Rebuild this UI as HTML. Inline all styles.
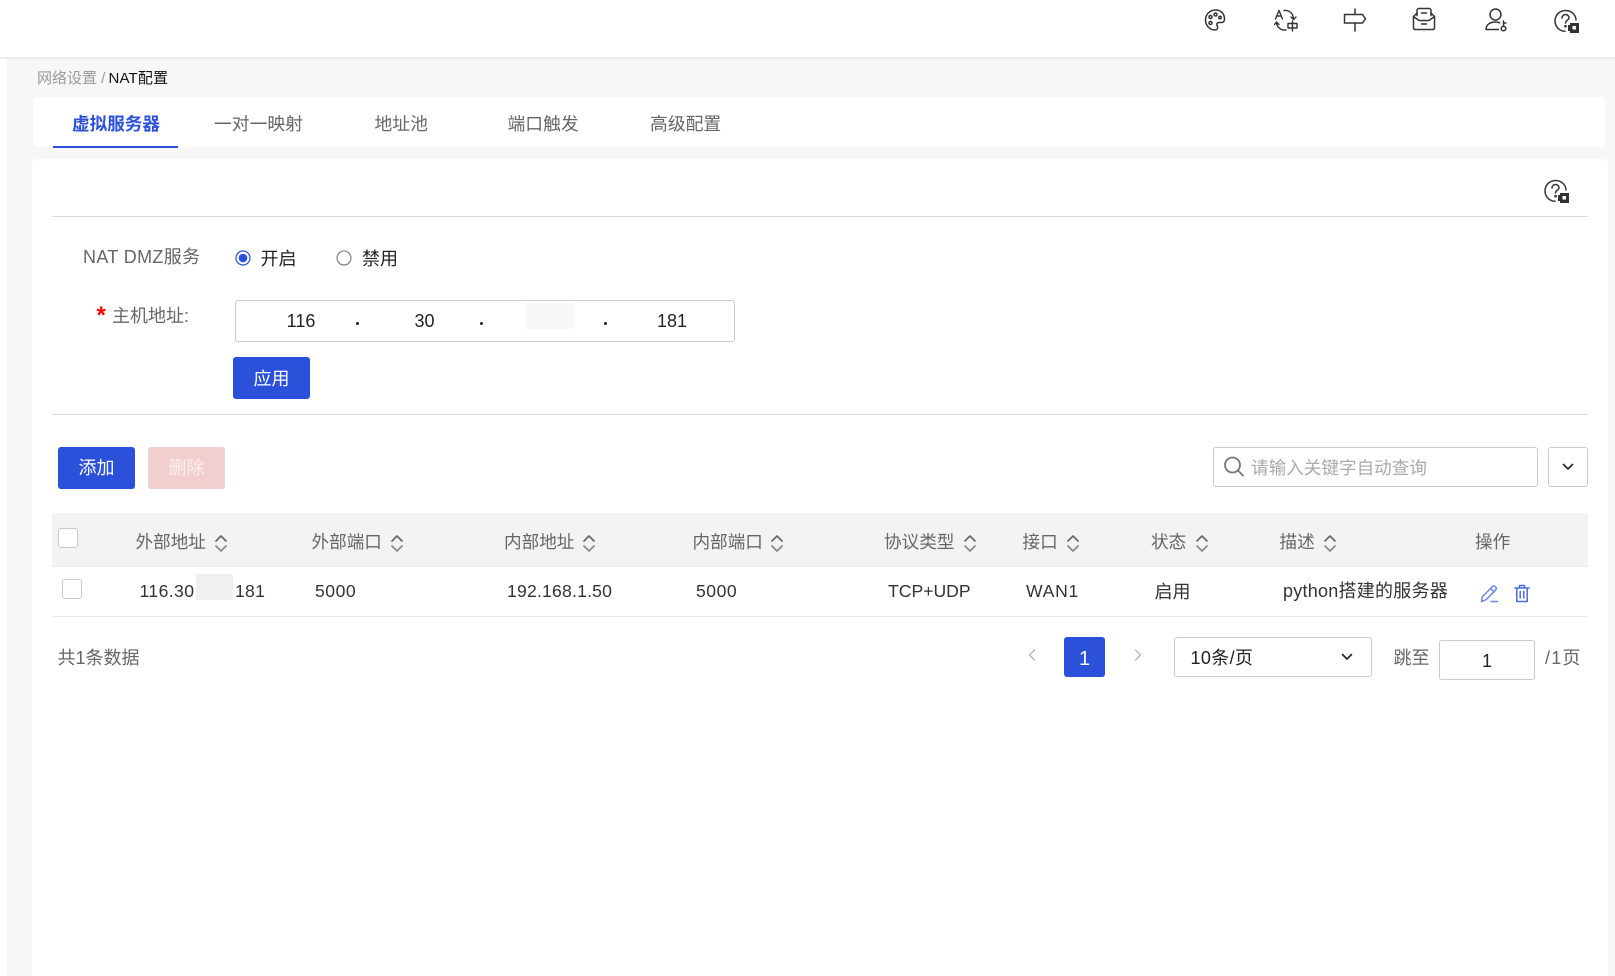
<!DOCTYPE html>
<html lang="zh-CN">
<head>
<meta charset="utf-8">
<title>NAT配置</title>
<style>
html,body{margin:0;padding:0;width:1615px;height:976px;overflow:hidden;background:#fff}
body{position:relative;font-family:"Liberation Sans","Noto Sans CJK SC",sans-serif;font-size:17px;color:#333}
.a{position:absolute;box-sizing:border-box}
.t{position:absolute;white-space:nowrap;line-height:20px;height:20px;font-size:17.6px}
.c{transform:translateX(-50%)}
.g{color:#666}
.d{color:#333}
.w{font-size:18px}
.btn{position:absolute;box-sizing:border-box;width:77px;height:42px;background:#2b50d9;border-radius:3px;color:#fff;font-size:18px;line-height:44px;text-align:center}
.cb{position:absolute;box-sizing:border-box;width:20px;height:20px;border:1px solid #ccc;border-radius:3px;background:#fff}
svg{position:absolute;overflow:visible;fill:none}
.hd{top:532px}
.rw{top:581px;letter-spacing:.25px}
</style>
</head>
<body>
<!-- backgrounds -->
<div class="a" style="left:7px;top:58px;width:1608px;height:918px;background:#f7f7f7"></div>
<div class="a" style="left:0;top:57px;width:1615px;height:2px;background:#ececec"></div>
<div class="a" style="left:33px;top:97px;width:1572px;height:50px;background:#fff;border-radius:4px"></div>
<div class="a" style="left:32px;top:159px;width:1576px;height:817px;background:#fff;border-radius:4px 4px 0 0"></div>

<!-- top icons -->
<svg style="left:1203px;top:8px" width="24" height="24" viewBox="0 0 24 24" stroke="#333" stroke-width="1.500" stroke-linecap="round" stroke-linejoin="round"><path d="M12.500 2c-5.600 0-10 4.300-10 10 0 5.300 4.200 10 9.500 10 1.600 0 2.700-1.200 2.700-2.600 0-.7-.3-1.300-.6-1.800-.4-.6-.5-1.200-.2-1.900.4-.8 1.100-1.200 2.100-1.200h2.600c1.500 0 2.900-1.100 2.900-3.300C21.500 5.500 17.600 2 12.500 2z"/><circle cx="7.500" cy="9" r="1.500"/><circle cx="12.500" cy="6.500" r="1.500"/><circle cx="17" cy="9.500" r="1.200"/><circle cx="7.500" cy="15" r="1.500"/></svg>

<svg style="left:1274px;top:8px" width="24" height="24" viewBox="0 0 24 24" stroke="#333" stroke-width="1.400" stroke-linecap="round" stroke-linejoin="round"><path d="M1.500 11 5 2.500l3.500 8.500M2.800 8h4.400"/><path d="M10 2.500c5-.5 9 2.500 9.500 8M17 9l2.500 2.500 2.500-2.500"/><path d="M12 22c-5 .5-9-2.500-9.500-7.500M.5 16.500 2.500 14 5 16.500"/><path d="M14 15.500h9V20h-9zM18.500 13v10"/></svg>

<svg style="left:1343px;top:8px" width="24" height="24" viewBox="0 0 24 24" stroke="#333" stroke-width="1.500" stroke-linecap="round" stroke-linejoin="round"><path d="M1.500 6.500h18l3 4.300-3 4.200h-18zM12 1v5.500M12 15v8"/></svg>

<svg style="left:1412px;top:7px" width="24" height="24" viewBox="0 0 24 24" stroke="#333" stroke-width="1.500" stroke-linecap="round" stroke-linejoin="round"><path d="M5 8.500V3.500C5 2.200 6 1.500 7 1.500h10c1 0 2 .7 2 2v5"/><path d="M5 6 1.500 9.500v11c0 1.300.8 2 2 2h17c1.200 0 2-.7 2-2v-11L19 6"/><path d="M1.500 9.500 7 13.500h10l5.500-4M9.500 6h5M9.500 17h5"/></svg>

<svg style="left:1484px;top:8px" width="24" height="24" viewBox="0 0 24 24" stroke="#333" stroke-width="1.500" stroke-linecap="round" stroke-linejoin="round"><circle cx="11.500" cy="6.500" r="5.500"/><path d="M2 21.500c0-4.500 3.500-7.500 9.500-7.500 1.600 0 3 .3 4.200.8M2 21.500h12.500"/><circle cx="19.500" cy="20.500" r="2.300"/><path d="M19.500 18.200V13M19.500 15h2.300"/></svg>

<svg style="left:1554px;top:9px" width="24" height="24" viewBox="0 0 24 24" stroke="#333" stroke-width="1.500" stroke-linecap="round" stroke-linejoin="round"><path d="M11 22.300C5.200 22 1 17.500 1 12 1 6.200 5.500 1.500 11.500 1.500S22 6 22 11"/><path d="M8 9c0-2 1.500-3.500 3.500-3.500S15 7 15 8.800c0 2.200-3.500 2.700-3.500 5.200"/><circle cx="11.500" cy="17.200" r=".6"/><rect x="14" y="16" width="5" height="6" fill="#333" stroke="none"/><rect x="16" y="14" width="9" height="10" fill="#333" stroke="none"/><rect x="18.500" y="17" width="3.500" height="3.500" fill="#fff" stroke="none"/></svg>

<!-- breadcrumb -->
<div class="t" style="left:37px;top:69px;font-size:15px;color:#999">网络设置 / <span style="color:#111;margin-left:-1px;letter-spacing:.15px">NAT配置</span></div>

<!-- tabs -->
<div class="t" style="left:72px;top:114px;color:#2b50d9;font-weight:bold">虚拟服务器</div>
<div class="a" style="left:53px;top:146px;width:125px;height:2px;background:#2b50d9"></div>
<div class="t g" style="left:214px;top:114px;font-size:17.8px">一对一映射</div>
<div class="t g" style="left:374.500px;top:114px;font-size:17.8px">地址池</div>
<div class="t g" style="left:507.500px;top:114px;font-size:17.8px">端口触发</div>
<div class="t g" style="left:650px;top:114px;font-size:17.8px">高级配置</div>

<!-- help -->
<svg style="left:1544px;top:179px" width="24" height="24" viewBox="0 0 24 24" stroke="#333" stroke-width="1.500" stroke-linecap="round" stroke-linejoin="round"><path d="M11 22.300C5.200 22 1 17.500 1 12 1 6.200 5.500 1.500 11.500 1.500S22 6 22 11"/><path d="M8 9c0-2 1.500-3.500 3.500-3.500S15 7 15 8.800c0 2.200-3.500 2.700-3.500 5.200"/><circle cx="11.500" cy="17.200" r=".6"/><rect x="14" y="16" width="5" height="6" fill="#333" stroke="none"/><rect x="16" y="14" width="9" height="10" fill="#333" stroke="none"/><rect x="18.500" y="17" width="3.500" height="3.500" fill="#fff" stroke="none"/></svg>
<div class="a" style="left:52px;top:216px;width:1536px;height:1px;background:#d9d9d9"></div>

<!-- NAT DMZ -->
<div class="t g w" style="left:83px;top:247px;letter-spacing:.35px">NAT DMZ服务</div>
<svg style="left:235px;top:250px" width="16" height="16" viewBox="0 0 16 16"><circle cx="8" cy="8" r="7" stroke="#2b50d9" stroke-width="1.200" fill="#fff"/><circle cx="8" cy="8" r="4.300" fill="#2b50d9"/></svg>
<div class="t w" style="left:260.500px;top:249px;color:#222">开启</div>
<svg style="left:336px;top:250px" width="16" height="16" viewBox="0 0 16 16"><circle cx="8" cy="8" r="7" stroke="#777" stroke-width="1.100" fill="#fff"/></svg>
<div class="t w" style="left:362px;top:249px;color:#222">禁用</div>

<!-- host -->
<div class="t" style="left:96.500px;top:306px;color:#f00;font-size:24px;font-weight:bold">*</div>
<div class="t g w" style="left:112px;top:306px">主机地址:</div>
<div class="a" style="left:235px;top:300px;width:500px;height:42px;border:1px solid #ccc;border-radius:3px;background:#fff"></div>
<div class="t c w" style="left:301px;top:311px;color:#222">116</div>
<div class="t c w" style="left:424.500px;top:311px;color:#222">30</div>
<div class="t c w" style="left:672px;top:311px;color:#222">181</div>
<div class="a" style="left:356px;top:322px;width:3px;height:3px;border-radius:50%;background:#222"></div>
<div class="a" style="left:480px;top:322px;width:3px;height:3px;border-radius:50%;background:#222"></div>
<div class="a" style="left:604px;top:322px;width:3px;height:3px;border-radius:50%;background:#222"></div>
<div class="a" style="left:526px;top:303px;width:49px;height:26px;background:#f8f8f8"></div>

<div class="btn" style="left:233px;top:357px">应用</div>
<div class="a" style="left:52px;top:414px;width:1536px;height:1px;background:#d9d9d9"></div>

<!-- toolbar -->
<div class="btn" style="left:58px;top:447px;line-height:42px">添加</div>
<div class="btn" style="left:148px;top:447px;line-height:42px;background:#f2cfcf;color:#fbeeee">删除</div>

<div class="a" style="left:1213px;top:447px;width:325px;height:40px;border:1px solid #ccc;border-radius:3px;background:#fff"></div>
<svg style="left:1223px;top:456px" width="22" height="22" viewBox="0 0 22 22" stroke="#777" stroke-width="1.800" stroke-linecap="round"><circle cx="9.500" cy="9" r="7.500"/><path d="M15 14.500l5 5"/></svg>
<div class="t" style="left:1251px;top:458px;color:#aaa">请输入关键字自动查询</div>
<div class="a" style="left:1548px;top:447px;width:40px;height:40px;border:1px solid #ccc;border-radius:3px;background:#fff"></div>
<svg style="left:1562px;top:463px" width="12" height="8" viewBox="0 0 12 8" stroke="#222" stroke-width="1.600" stroke-linecap="round" stroke-linejoin="round"><path d="M1.500 1.500 6 6l4.500-4.500"/></svg>

<!-- table head -->
<div class="a" style="left:52px;top:513px;width:1536px;height:53px;background:#f3f3f3"></div>
<div class="a" style="left:52px;top:566px;width:1536px;height:1px;background:#ebebeb"></div>
<div class="cb" style="left:58px;top:528px"></div>
<div class="t g hd" style="left:135.500px">外部地址</div>
<div class="t g hd" style="left:311.500px">外部端口</div>
<div class="t g hd" style="left:504px">内部地址</div>
<div class="t g hd" style="left:692.500px">内部端口</div>
<div class="t g hd" style="left:884px">协议类型</div>
<div class="t g hd" style="left:1022.500px">接口</div>
<div class="t g hd" style="left:1151px">状态</div>
<div class="t g hd" style="left:1279.500px">描述</div>
<div class="t g hd" style="left:1475px">操作</div>

<svg style="left:215px;top:535px" width="12" height="17" viewBox="0 0 12 17" stroke-width="1.700" stroke-linecap="round" stroke-linejoin="round"><path d="M1 6 6 1l5 5" stroke="#666"/><path d="M1 11l5 5 5-5" stroke="#888"/></svg>
<svg style="left:391px;top:535px" width="12" height="17" viewBox="0 0 12 17" stroke-width="1.700" stroke-linecap="round" stroke-linejoin="round"><path d="M1 6 6 1l5 5" stroke="#666"/><path d="M1 11l5 5 5-5" stroke="#888"/></svg>
<svg style="left:583px;top:535px" width="12" height="17" viewBox="0 0 12 17" stroke-width="1.700" stroke-linecap="round" stroke-linejoin="round"><path d="M1 6 6 1l5 5" stroke="#666"/><path d="M1 11l5 5 5-5" stroke="#888"/></svg>
<svg style="left:771px;top:535px" width="12" height="17" viewBox="0 0 12 17" stroke-width="1.700" stroke-linecap="round" stroke-linejoin="round"><path d="M1 6 6 1l5 5" stroke="#666"/><path d="M1 11l5 5 5-5" stroke="#888"/></svg>
<svg style="left:964px;top:535px" width="12" height="17" viewBox="0 0 12 17" stroke-width="1.700" stroke-linecap="round" stroke-linejoin="round"><path d="M1 6 6 1l5 5" stroke="#666"/><path d="M1 11l5 5 5-5" stroke="#888"/></svg>
<svg style="left:1067px;top:535px" width="12" height="17" viewBox="0 0 12 17" stroke-width="1.700" stroke-linecap="round" stroke-linejoin="round"><path d="M1 6 6 1l5 5" stroke="#666"/><path d="M1 11l5 5 5-5" stroke="#888"/></svg>
<svg style="left:1196px;top:535px" width="12" height="17" viewBox="0 0 12 17" stroke-width="1.700" stroke-linecap="round" stroke-linejoin="round"><path d="M1 6 6 1l5 5" stroke="#666"/><path d="M1 11l5 5 5-5" stroke="#888"/></svg>
<svg style="left:1324px;top:535px" width="12" height="17" viewBox="0 0 12 17" stroke-width="1.700" stroke-linecap="round" stroke-linejoin="round"><path d="M1 6 6 1l5 5" stroke="#666"/><path d="M1 11l5 5 5-5" stroke="#888"/></svg>

<!-- row -->
<div class="cb" style="left:62px;top:579px"></div>
<div class="t d rw" style="left:139.500px;letter-spacing:.4px">116.30</div>
<div class="a" style="left:196px;top:574px;width:37px;height:26px;background:#f0f0f0"></div>
<div class="t d rw" style="left:235px">181</div>
<div class="t d rw" style="left:315px;letter-spacing:.5px">5000</div>
<div class="t d rw" style="left:507px;letter-spacing:.2px">192.168.1.50</div>
<div class="t d rw" style="left:696px;letter-spacing:.5px">5000</div>
<div class="t d rw" style="left:888px;letter-spacing:0">TCP+UDP</div>
<div class="t d rw" style="left:1026px;letter-spacing:.7px">WAN1</div>
<div class="t d rw w" style="left:1154.500px;top:582px;letter-spacing:0">启用</div>
<div class="t d rw w" style="left:1283px">python搭建的服务器</div>
<svg style="left:1480px;top:584px" width="19" height="19" viewBox="0 0 19 19" stroke="#6f87e6" stroke-width="1.500" stroke-linecap="round" stroke-linejoin="round"><path d="M1.500 17.500l1-5L12.500 2.500c.8-.8 1.800-.8 2.500 0l.8.8c.7.7.7 1.700 0 2.400L6 15.800zM10.500 4.500l3.800 3.500"/><path d="M11 17.500h6.500"/></svg>
<svg style="left:1514px;top:584px" width="16" height="19" viewBox="0 0 16 19" stroke="#4a6be0" stroke-width="1.500" stroke-linecap="round" stroke-linejoin="round"><path d="M1 4h14M5.500 4V1.500h5V4M2.800 4v13.500h10.400V4M6.200 7.500v6.500M9.800 7.500v6.500"/></svg>
<div class="a" style="left:52px;top:616px;width:1536px;height:1px;background:#ececec"></div>

<!-- pagination -->
<div class="t g w" style="left:57.500px;top:648px">共1条数据</div>
<svg style="left:1028px;top:649px" width="8" height="12" viewBox="0 0 8 12" stroke="#aaa" stroke-width="1.200" stroke-linecap="round" stroke-linejoin="round"><path d="M6.500 1 1.500 6l5 5"/></svg>
<div class="a" style="left:1064px;top:637px;width:41px;height:40px;background:#2b50d9;border-radius:3px;color:#fff;text-align:center;line-height:44px;font-size:20px">1</div>
<svg style="left:1134px;top:649px" width="8" height="12" viewBox="0 0 8 12" stroke="#aaa" stroke-width="1.200" stroke-linecap="round" stroke-linejoin="round"><path d="M1.500 1l5 5-5 5"/></svg>
<div class="a" style="left:1174px;top:637px;width:198px;height:40px;border:1px solid #ccc;border-radius:3px;background:#fff"></div>
<div class="t w" style="left:1190.500px;top:648px;color:#222;letter-spacing:.35px">10条/页</div>
<svg style="left:1341px;top:653px" width="12" height="8" viewBox="0 0 12 8" stroke="#222" stroke-width="1.600" stroke-linecap="round" stroke-linejoin="round"><path d="M1.500 1.500 6 6l4.500-4.500"/></svg>
<div class="t g w" style="left:1393.500px;top:648px">跳至</div>
<div class="a" style="left:1439px;top:640px;width:96px;height:40px;border:1px solid #ccc;border-radius:3px;background:#fff"></div>
<div class="t c w" style="left:1487px;top:651px;color:#222">1</div>
<div class="t g w" style="left:1545px;top:648px;letter-spacing:1.200px">/1页</div>
</body>
</html>
